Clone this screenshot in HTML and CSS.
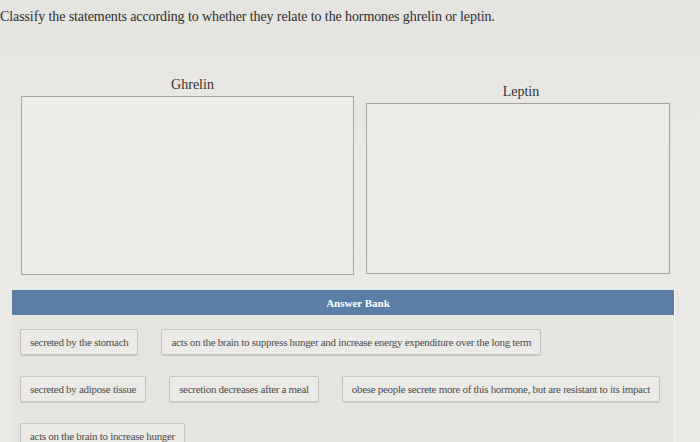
FILE: index.html
```html
<!DOCTYPE html>
<html>
<head>
<meta charset="utf-8">
<link rel="stylesheet" href="styles.css">
</head>
<body>
<p class="prompt">Classify the statements according to whether they relate to the hormones ghrelin or leptin.</p>
<div class="bins">
  <div class="bin bin-ghrelin">
    <div class="bin-label">Ghrelin</div>
    <div class="bin-box"></div>
  </div>
  <div class="bin bin-leptin">
    <div class="bin-label">Leptin</div>
    <div class="bin-box"></div>
  </div>
</div>
<div class="bank">
  <div class="bank-header">Answer Bank</div>
  <div class="bank-body">
    <div class="chip">secreted by the stomach</div>
    <div class="chip">acts on the brain to suppress hunger and increase energy expenditure over the long term</div>
    <div class="chip">secreted by adipose tissue</div>
    <div class="chip">secretion decreases after a meal</div>
    <div class="chip">obese people secrete more of this hormone, but are resistant to its impact</div>
    <div class="chip">acts on the brain to increase hunger</div>
  </div>
</div>
</body>
</html>
```
FILE: styles.css
```css
html, body {
  margin: 0;
  padding: 0;
}
body {
  width: 700px;
  height: 442px;
  overflow: hidden;
  background: linear-gradient(180deg, #e4e3df 0%, #ebeae6 40%, #e9e8e4 100%);
  font-family: "Liberation Serif", "Times New Roman", serif;
  color: #333;
}
.prompt {
  margin: 0;
  padding: 8px 0 0 0;
  font-size: 14px;
  line-height: 18px;
  letter-spacing: -0.1px;
  color: #2e2e2e;
}
.bins {
  display: flex;
  gap: 12px;
  margin-top: 51px;
  padding-left: 21px;
}
.bin {
  display: flex;
  flex-direction: column;
  align-items: center;
}
.bin-label {
  font-size: 14px;
  line-height: 16px;
  color: #333;
  margin-bottom: 3px;
}
.bin-box {
  background: #edece8;
  border: 1px solid #a6a5a2;
  box-sizing: border-box;
}
.bin-ghrelin .bin-label {
  padding-left: 10px;
}
.bin-ghrelin .bin-box {
  width: 333px;
  height: 179px;
}
.bin-leptin {
  margin-top: 7px;
}
.bin-leptin .bin-label {
  padding-left: 6px;
}
.bin-leptin .bin-box {
  width: 304px;
  height: 171px;
}
.bank {
  margin: 15px 0 0 12px;
  width: 662px;
  background: #e6e5e1;
  border-right: 1px solid #f6f6f4;
}
.bank-header {
  background: #5a7ea6;
  color: #fff;
  font-size: 11px;
  font-weight: bold;
  height: 25px;
  line-height: 26px;
  text-align: center;
  padding-left: 30px;
}
.bank-body {
  display: flex;
  flex-wrap: wrap;
  column-gap: 23px;
  row-gap: 21px;
  padding: 14px 8px 20px 8px;
}
.chip {
  height: 26px;
  line-height: 24px;
  box-sizing: border-box;
  padding: 0 9px;
  border: 1px solid #c6c5c1;
  border-radius: 2px;
  background: #ebeae6;
  box-shadow: 0 1px 1px rgba(0, 0, 0, 0.12);
  font-size: 11px;
  letter-spacing: -0.3px;
  color: #4d4d4d;
  white-space: nowrap;
}
```
